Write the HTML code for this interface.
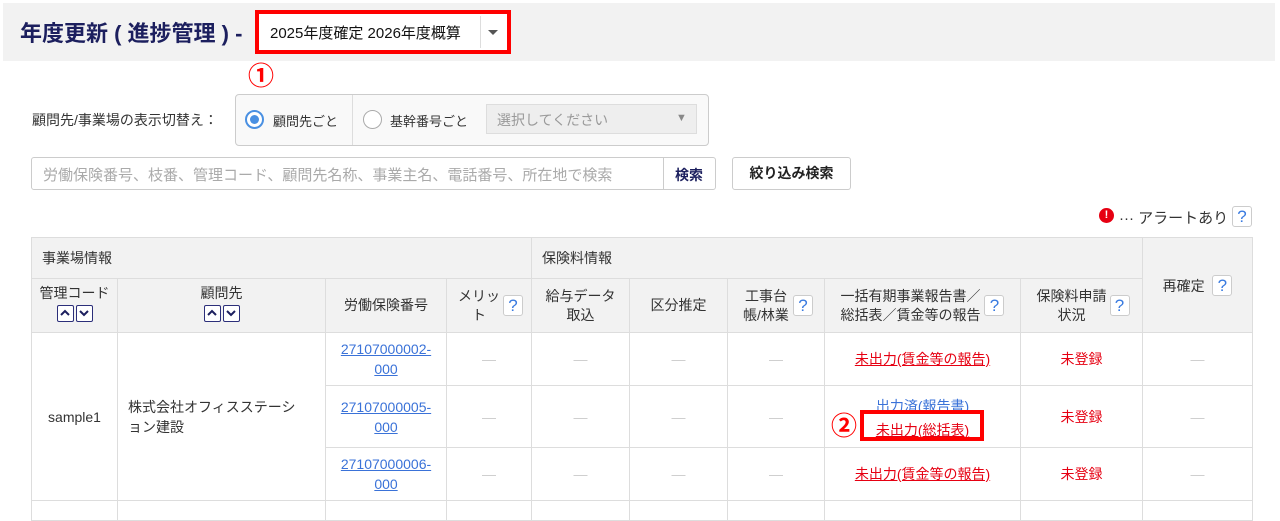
<!DOCTYPE html>
<html><head><meta charset="utf-8"><style>
*{margin:0;padding:0;box-sizing:border-box}
body{width:1280px;height:505px;background:#fff;font-family:"Liberation Sans","Noto Sans CJK JP",sans-serif;font-size:14px;color:#333;position:relative;overflow:hidden}
.a{position:absolute}
.hdr{left:3px;top:3px;width:1272px;height:58px;background:#f2f2f2}
.title{left:20px;top:16px;font-size:22px;font-weight:bold;color:#1c1f5e}
.redbox{border:4px solid #f00}
.q{display:inline-block;width:20px;height:21px;border:1px solid #ccc;border-radius:3px;background:#fff;color:#3a7be0;font-size:17px;text-align:center;line-height:19px}
table{position:absolute;left:31px;top:237px;border-collapse:collapse;table-layout:fixed}
td,th{border:1px solid #ddd;font-weight:normal;font-size:14px;text-align:center;vertical-align:middle;line-height:20px;padding:0}
th{background:#f2f2f2;color:#333;line-height:19px}
td.d{color:#ccc}
a{color:#3a72d8;text-decoration:underline}
.r{color:#e60012;text-decoration:underline}
.rr{color:#e60012}
.sb{display:inline-block;width:17px;height:17px;border:1.5px solid #2c2f7a;border-radius:2px;background:#fff;margin:0 1px;vertical-align:middle;position:relative}
</style></head><body>
<div class="a hdr"></div>
<div class="a title">年度更新 ( 進捗管理 ) -</div>
<div class="a redbox" style="left:255px;top:10px;width:256px;height:44px"></div>
<div class="a" style="left:259px;top:14px;width:248px;height:36px;background:#fff"></div>
<div class="a" style="left:270px;top:22px;font-size:15px;color:#111">2025年度確定 2026年度概算</div>
<div class="a" style="left:480px;top:16px;width:1px;height:32px;background:#ddd"></div>
<div class="a" style="left:488px;top:30px;width:0;height:0;border-left:5px solid transparent;border-right:5px solid transparent;border-top:5px solid #555"></div>
<div class="a" style="left:248px;top:56px;color:#f00;font-size:26px;font-weight:bold">①</div>

<div class="a" style="left:32px;top:110px;font-size:14px">顧問先/事業場の表示切替え：</div>
<div class="a" style="left:235px;top:94px;width:474px;height:52px;border:1px solid #ccc;border-radius:4px;background:#f9f9f9"></div>
<div class="a" style="left:352px;top:95px;width:1px;height:50px;background:#ddd"></div>
<div class="a" style="left:245px;top:110px;width:19px;height:19px;border:2px solid #4a90e2;border-radius:50%;background:#fff"></div>
<div class="a" style="left:250px;top:115px;width:9px;height:9px;border-radius:50%;background:#4a90e2"></div>
<div class="a" style="left:273px;top:111px;font-size:13px">顧問先ごと</div>
<div class="a" style="left:363px;top:110px;width:19px;height:19px;border:1.5px solid #aaa;border-radius:50%;background:#fff"></div>
<div class="a" style="left:390px;top:111px;font-size:13px">基幹番号ごと</div>
<div class="a" style="left:486px;top:104px;width:211px;height:30px;border:1px solid #ddd;background:#eee"></div>
<div class="a" style="left:497px;top:110px;font-size:14px;color:#999">選択してください</div>
<div class="a" style="left:676px;top:112px;font-size:11px;color:#888">▼</div>

<div class="a" style="left:31px;top:157px;width:685px;height:33px;border:1px solid #ccc;border-radius:3px;background:#fff"></div>
<div class="a" style="left:663px;top:158px;width:1px;height:31px;background:#ccc"></div>
<div class="a" style="left:43px;top:164px;color:#aaa;font-size:15px">労働保険番号、枝番、管理コード、顧問先名称、事業主名、電話番号、所在地で検索</div>
<div class="a" style="left:675px;top:165px;font-weight:bold;color:#1c1f5e">検索</div>
<div class="a" style="left:732px;top:157px;width:119px;height:33px;border:1px solid #ccc;border-radius:3px;background:#fff;text-align:center;line-height:31px;font-weight:bold;color:#222">絞り込み検索</div>

<div class="a" style="left:1099px;top:208px;width:15px;height:15px;border-radius:50%;background:#e60012;color:#fff;font-size:11px;font-weight:bold;text-align:center;line-height:15px">!</div>
<div class="a" style="left:1119px;top:207px;font-size:15px">··· アラートあり</div>
<div class="a" style="left:1232px;top:206px"><span class="q">?</span></div>

<table>
<colgroup><col style="width:86px"><col style="width:208px"><col style="width:121px"><col style="width:85px"><col style="width:98px"><col style="width:98px"><col style="width:97px"><col style="width:196px"><col style="width:122px"><col style="width:110px"></colgroup>
<tr style="height:41px"><th colspan="4" style="text-align:left;padding-left:10px">事業場情報</th><th colspan="5" style="text-align:left;padding-left:10px">保険料情報</th><th rowspan="2">再確定 &nbsp;<span class="q">?</span></th></tr>
<tr style="height:54px">
<th style="vertical-align:top;padding-top:5px">管理コード<br><span class="sb"><svg width="14" height="14" style="position:absolute;left:0;top:0"><path d="M3 9 L7 5 L11 9" fill="none" stroke="#1c1f5e" stroke-width="2"/></svg></span><span class="sb"><svg width="14" height="14" style="position:absolute;left:0;top:0"><path d="M3 5 L7 9 L11 5" fill="none" stroke="#1c1f5e" stroke-width="2"/></svg></span></th>
<th style="vertical-align:top;padding-top:5px">顧問先<br><span class="sb"><svg width="14" height="14" style="position:absolute;left:0;top:0"><path d="M3 9 L7 5 L11 9" fill="none" stroke="#1c1f5e" stroke-width="2"/></svg></span><span class="sb"><svg width="14" height="14" style="position:absolute;left:0;top:0"><path d="M3 5 L7 9 L11 5" fill="none" stroke="#1c1f5e" stroke-width="2"/></svg></span></th>
<th>労働保険番号</th>
<th><span style="display:inline-block;width:48px;vertical-align:middle;white-space:nowrap">メリッ<br>ト</span><span class="q" style="vertical-align:middle">?</span></th>
<th>給与データ<br>取込</th>
<th>区分推定</th>
<th><span style="display:inline-block;width:54px;vertical-align:middle;white-space:nowrap">工事台<br>帳/林業</span><span class="q" style="vertical-align:middle">?</span></th>
<th style="white-space:nowrap"><span style="display:inline-block;vertical-align:middle">一括有期事業報告書／<br>総括表／賃金等の報告</span> <span class="q" style="vertical-align:middle">?</span></th>
<th style="white-space:nowrap"><span style="display:inline-block;width:76px;vertical-align:middle">保険料申請<br>状況</span><span class="q" style="vertical-align:middle">?</span></th>
</tr>
<tr style="height:53px"><td rowspan="3">sample1</td><td rowspan="3" style="text-align:left;padding-left:10px">株式会社オフィスステーシ<br>ョン建設</td><td><a>27107000002-<br>000</a></td><td class="d">—</td><td class="d">—</td><td class="d">—</td><td class="d">—</td><td><span class="r">未出力(賃金等の報告)</span></td><td class="rr">未登録</td><td class="d">—</td></tr>
<tr style="height:62px"><td><a>27107000005-<br>000</a></td><td class="d">—</td><td class="d">—</td><td class="d">—</td><td class="d">—</td><td style="line-height:24px;padding-top:2px"><a>出力済(報告書)</a><br><span class="r">未出力(総括表)</span></td><td class="rr">未登録</td><td class="d">—</td></tr>
<tr style="height:53px"><td><a>27107000006-<br>000</a></td><td class="d">—</td><td class="d">—</td><td class="d">—</td><td class="d">—</td><td><span class="r">未出力(賃金等の報告)</span></td><td class="rr">未登録</td><td class="d">—</td></tr>
<tr style="height:20px"><td></td><td></td><td></td><td></td><td></td><td></td><td></td><td></td><td></td><td></td></tr>
</table>
<div class="a redbox" style="left:860px;top:410px;width:124px;height:31px"></div>
<div class="a" style="left:831px;top:411px;color:#f00;font-size:26px;font-weight:bold;line-height:30px">②</div>
</body></html>
